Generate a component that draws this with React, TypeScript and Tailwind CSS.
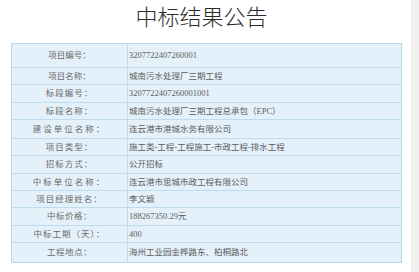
const rows = [
  { label: "项目编号：", value: "3207722407260001", h: "h-[24px]", track: "tracking-[0px]" },
  { label: "项目名称：", value: "城南污水处理厂三期工程", h: "h-[17px]", track: "tracking-[0px]" },
  { label: "标段编号：", value: "3207722407260001001", h: "h-[18px]", track: "tracking-[1px]" },
  { label: "标段名称：", value: "城南污水处理厂三期工程总承包（EPC）", h: "h-[17px]", track: "tracking-[1px]" },
  { label: "建设单位名称：", value: "连云港市港城水务有限公司", h: "h-[19px]", track: "tracking-[2px]" },
  { label: "项目类型：", value: "施工类-工程-工程施工-市政工程-排水工程", h: "h-[17px]", track: "tracking-[1px]" },
  { label: "招标方式：", value: "公开招标", h: "h-[18px]", track: "tracking-[1px]" },
  { label: "中标单位名称：", value: "连云港市思城市政工程有限公司", h: "h-[17px]", track: "tracking-[2px]" },
  { label: "项目经理姓名：", value: "李文颖", h: "h-[17px]", track: "tracking-[1px]" },
  { label: "中标价格：", value: "188267350.29元", h: "h-[18px]", track: "tracking-[0.5px]" },
  { label: "中标工期（天）：", value: "400", h: "h-[17px]", track: "tracking-[1px]" },
  { label: "工程地点：", value: "海州工业园金桦路东、柏桐路北", h: "h-[19px]", track: "tracking-[0.5px]" },
];

export default function App() {
  return (
    <div className="flex h-[272px] w-[419px] overflow-hidden bg-white">
      <div className="flex flex-1 flex-col">
        {/* Title */}
        <div className="h-[43px] pt-[4px] pr-[8px] text-center font-['Noto_Sans_CJK_SC',sans-serif] text-[22px] font-light leading-[22px] text-[#2a2a2a]">
          中标结果公告
        </div>

        {/* Info table */}
        <div className="ml-[11px] w-[391px] border border-[#b9d7e9] bg-[#e4f1fa] font-['Liberation_Serif','Noto_Sans_CJK_SC',serif] text-[8.5px] text-[#5c5c5c]">
          {rows.map((r, i) => (
            <div
              key={r.label}
              className={`flex ${r.h} ${i < rows.length - 1 ? "border-b border-[#c0dcec]" : ""}`}
            >
              <div className="flex w-[116px] items-center justify-center border-r border-[#c0dcec] text-[#6a6a6a]">
                <span className={r.track}>{r.label}</span>
              </div>
              <div className="flex flex-1 items-center pl-[1px]">{r.value}</div>
            </div>
          ))}
        </div>
      </div>

      {/* right gutter */}
      <div className="h-full w-[8px] bg-[#f0f0f0]" />
    </div>
  );
}
